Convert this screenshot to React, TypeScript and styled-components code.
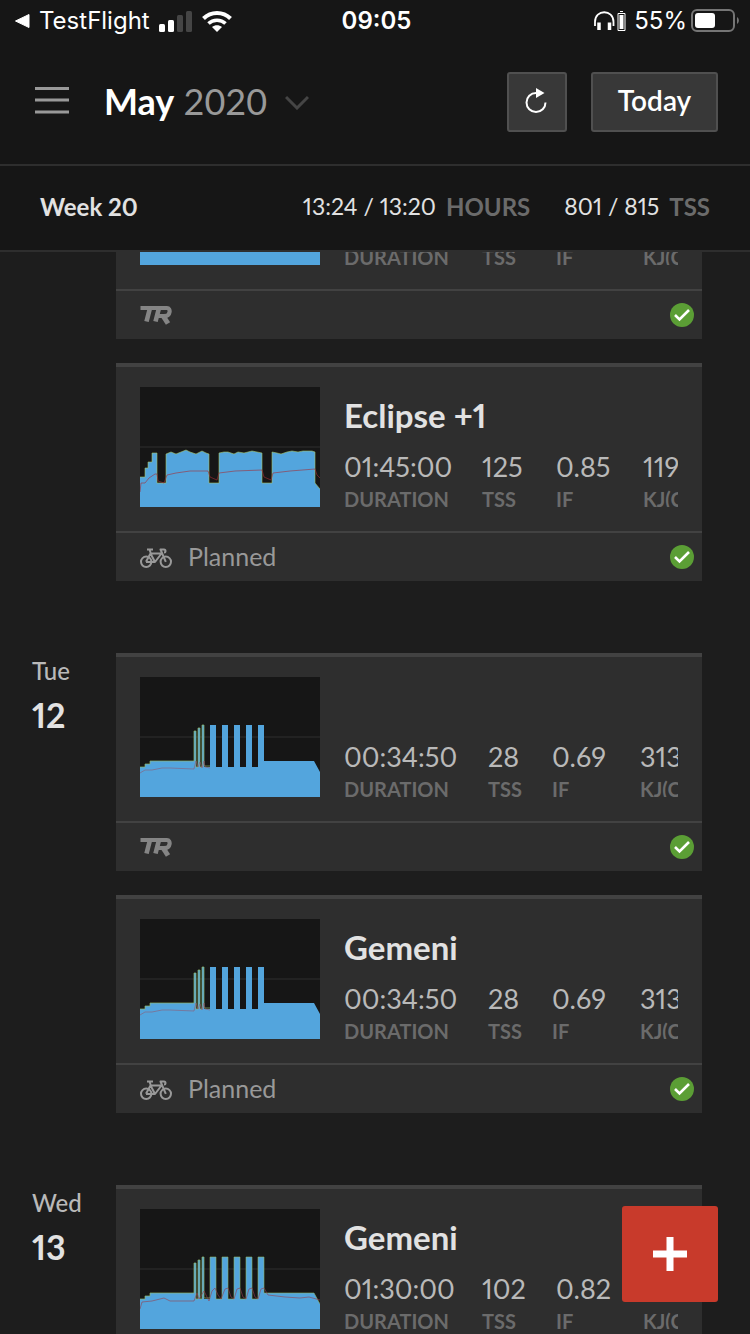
import React, { useLayoutEffect, useRef } from "react";
import styled, { createGlobalStyle } from "styled-components";

const GlobalStyle = createGlobalStyle`
  * { box-sizing: border-box; }
  body { margin: 0; background: #1d1d1d; }
  button { font: inherit; color: inherit; border: 0; padding: 0; margin: 0; cursor: pointer; background: none; }
  h1, h2, h3, p, dl, dd, dt { margin: 0; font: inherit; }
`;

const uiFont = `Lato, "Liberation Sans", sans-serif`;
const systemFont = `Inter, "Liberation Sans", sans-serif`;

const Screen = styled.div`
  position: relative;
  display: flex;
  flex-direction: column;
  height: 100vh;
  overflow: hidden;
  background: #1d1d1d;
  font-family: ${uiFont};
  font-variant-numeric: proportional-nums;
  color: #e2e2e2;
`;

const StatusBar = styled.div`
  flex: none;
  display: grid;
  grid-template-columns: 1fr auto 1fr;
  align-items: center;
  height: 40px;
  padding: 0 11px 0 14px;
  background: #161616;
  color: #fff;
  font-family: ${systemFont};
  font-size: 24px;
  line-height: 42px;
`;

const StatusGroup = styled.div<{ $end?: boolean }>`
  display: flex;
  align-items: center;
  justify-content: ${(p) => (p.$end ? "flex-end" : "flex-start")};
  gap: ${(p) => (p.$end ? "4px" : "9px")};
`;

const BackLink = styled.a`
  display: flex;
  align-items: center;
  gap: 9px;
  color: inherit;
  text-decoration: none;
`;

const Clock = styled.time`
  font-weight: 600;
`;

const Header = styled.header`
  flex: none;
  display: flex;
  align-items: center;
  height: 126px;
  padding: 0 32px 0 34px;
  border-bottom: 2px solid #2e2e2e;
  background: #161616;
`;

const MenuButton = styled.button`
  display: flex;
  width: 36px;
  height: 36px;
  margin-right: 34px;
`;

const MonthButton = styled.button`
  display: flex;
  align-items: center;
  gap: 18px;
  color: #999;
  font-size: 36px;
  font-variant-numeric: tabular-nums;
  line-height: 44px;

  span { padding-bottom: 2px; }
  strong { color: #fff; font-weight: 700; }
`;

const Actions = styled.div`
  display: flex;
  gap: 24px;
  margin-left: auto;
`;

const HeaderButton = styled.button<{ $square?: boolean }>`
  display: flex;
  align-items: center;
  justify-content: center;
  height: 60px;
  width: ${(p) => (p.$square ? "60px" : "127px")};
  padding-bottom: 4px;
  border: 2px solid #505050;
  border-radius: 3px;
  background: #383838;
  color: #fff;
  font-size: 28px;
  font-weight: 600;
`;

const WeekBar = styled.section`
  flex: none;
  display: flex;
  align-items: center;
  height: 86px;
  padding: 0 40px 4px;
  border-bottom: 2px solid #2e2e2e;
  background: #161616;
  font-size: 24px;
`;

const WeekTitle = styled.h2`
  margin-right: auto;
  font-weight: 700;
`;

const WeekTotal = styled.p`
  display: flex;
  align-items: center;
  gap: 10px;
  margin-left: 34px;
  font-size: 23px;
  white-space: nowrap;

  span { color: #6b6b6b; font-size: 24px; font-weight: 700; }
`;

const Calendar = styled.main`
  flex: 1;
  min-height: 0;
  overflow-y: auto;
  scrollbar-width: none;
`;

const Day = styled.section`
  display: grid;
  grid-template-columns: 84px minmax(0, 1fr);
  padding: 0 48px 72px 32px;
`;

const DayLabel = styled.h2`
  padding-top: 4px;
  color: #b9b9b9;
  font-size: 24px;
  font-weight: 500;
  line-height: 28px;
`;

const DayNumber = styled.strong`
  display: block;
  margin-top: 10px;
  color: #e2e2e2;
  font-size: 34px;
  font-weight: 700;
  line-height: 40px;
`;

const Cards = styled.div`
  display: grid;
  gap: 24px;
`;

const Card = styled.article`
  border-top: 4px solid #424242;
  background: #2e2e2e;
`;

const CardBody = styled.div`
  display: grid;
  grid-template-columns: 180px minmax(0, 1fr);
  column-gap: 24px;
  padding: 20px 24px 24px;
`;

const Details = styled.div`
  overflow: hidden;
`;

const CardTitle = styled.h3`
  height: 56px;
  font-size: 33px;
  font-weight: 700;
  line-height: 56px;
`;

const Stats = styled.dl<{ $columns: string }>`
  display: grid;
  grid-template-columns: ${(p) => p.$columns};
  white-space: nowrap;
`;

const Stat = styled.div`
  display: flex;
  flex-direction: column-reverse;
  min-width: 0;

  dd { height: 48px; color: #b9b9b9; font-size: 27px; line-height: 48px; }
  dt { color: #6b6b6b; font-size: 20px; font-weight: 700; line-height: 16px; }
`;

const CardFooter = styled.footer`
  display: flex;
  align-items: center;
  gap: 16px;
  height: 50px;
  padding: 0 8px 0 24px;
  border-top: 2px solid #424242;
  color: #999;
  font-size: 25px;
  line-height: 44px;

  span { padding-bottom: 2px; }
  > :last-child { margin-left: auto; }
`;

const AddButton = styled.button`
  position: absolute;
  right: 32px;
  bottom: 32px;
  display: flex;
  align-items: center;
  justify-content: center;
  width: 96px;
  height: 96px;
  border-radius: 3px;
  background: #c83a2b;
`;

const BLUE = "#53a5dd";

type ChartKind = "solid" | "eclipse" | "planned" | "ridden";

const ECLIPSE_TOP =
  "M0 90H5V81H8V75H12V66H17V96H26V67L31 65L36 67L41 65L46 63L50 65L56 67L62 64L66 66L69 67V96H79V66L84 65H88L94 67L98 65L104 66L108 65L112 64L117 65L122 66V96H132V65L137 66L141 67L147 65L152 64L158 65L163 64H172L175 65V96L180 102";

const WARMUP = "M0 90H5V87H10V84H54V54H56V90H58V51H60V90H62V48H64V89H70";

function Chart({ kind }: { kind: ChartKind }) {
  return (
    <svg width="180" height="120" viewBox="0 0 180 120" role="img" aria-label="Power profile">
      <rect width="180" height="120" fill="#161616" />
      <path d="M0 60H180" stroke="#222" strokeWidth="2" />
      {kind === "solid" && <rect y="66" width="180" height="54" fill={BLUE} />}
      {kind === "eclipse" && (
        <>
          <path d={ECLIPSE_TOP + "V120H0Z"} fill={BLUE} />
          <path d={ECLIPSE_TOP} fill="none" stroke="#a5c46a" strokeWidth="0.6" />
          <path
            d="M0 105L1 96L5 96L9 91L15 87L17 87L18 94L24 96L27 88L36 86L50 84L68 84L70 90L77 93L79 86L95 84L122 83L124 90L131 93L133 86L150 84L175 82L177 88L180 91"
            fill="none" stroke="#a32d36" strokeWidth="0.6"
          />
        </>
      )}
      {(kind === "planned" || kind === "ridden") && (
        <>
          <path
            d="M0 90H5V87H10V84H54V54H56V90H58V51H60V90H62V48H64V90H70V48H76V90H82V48H88V90H94V48H100V90H106V48H112V90H118V48H124V84H174L180 95V120H0Z"
            fill={BLUE}
          />
          <path d={WARMUP} fill="none" stroke="#8fb76b" strokeWidth="0.7" />
        </>
      )}
      {kind === "planned" && (
        <path
          d="M0 96L5 93H12L22 91L30 91L54 92L56 84L58 90L60 85L62 91L64 84L65 90L70 91"
          fill="none" stroke="#8d5a74" strokeWidth="0.6"
        />
      )}
      {kind === "ridden" && (
        <>
          <path
            d="M70 89V48H76V90H82V48H88V90H94V48H100V90H106V48H112V90H118V48H124V84H174L180 95"
            fill="none" stroke="#8fb76b" strokeWidth="0.6"
          />
          <path
            d="M0 100L2 93L12 92L24 89L30 92H54L57 84L59 90L64 82L69 92L72 82L75 79L78 86L81 90L85 80L88 79L91 88L94 90L97 80L100 79L103 88L106 90L109 80L112 79L115 88L118 90L121 80L124 79L128 86L145 88L160 89L169 88L180 91"
            fill="none" stroke="#93404f" strokeWidth="0.6"
          />
        </>
      )}
    </svg>
  );
}

function BrandMark() {
  return (
    <svg width="32" height="20" viewBox="0 0 32 20" role="img" aria-label="TrainerRoad" fill="none" stroke="#858585">
      <path d="M0.5 3H27C31 3 30.500 11 25 11H17" strokeWidth="4.200" />
      <path d="M10 3L6.500 16.500M19 3L15.500 16.500" strokeWidth="4.600" />
      <path d="M22.500 10L28 18.500" strokeWidth="5" />
    </svg>
  );
}

function BikeIcon() {
  return (
    <svg width="32" height="22" viewBox="0 0 32 22" aria-hidden="true" fill="none" stroke="#999" strokeWidth="2">
      <circle cx="6.200" cy="15.800" r="5.200" />
      <circle cx="25.800" cy="15.800" r="5.200" />
      <path
        d="M6 15.800L10.500 7.500H21.500L15 16H6M10.500 7.500L15 16M7 3.500H13M11 8L9.500 3.500M25.800 15.800L20.500 3.500H24C26 3.500 26 6.500 24 6.500"
        strokeLinejoin="round"
      />
    </svg>
  );
}

function DoneIcon() {
  return (
    <svg width="24" height="24" viewBox="0 0 24 24" role="img" aria-label="Completed">
      <circle cx="12" cy="12" r="12" fill="#5b9e35" />
      <path d="M5 12L9.500 16.500L19 7" fill="none" stroke="#fff" strokeWidth="2.600" />
    </svg>
  );
}

type Workout = {
  title?: string;
  chart: ChartKind;
  values?: [string, string, string, string];
  planned: boolean;
};

const LABELS = ["DURATION", "TSS", "IF", "KJ(Cal)"];
const LONG = "138px 74px 87px 1fr";
const SHORT = "144px 64px 88px 1fr";

function WorkoutCard({ title, chart, values, planned }: Workout) {
  return (
    <Card>
      <CardBody>
        <Chart kind={chart} />
        <Details>
          <CardTitle>{title}</CardTitle>
          <Stats $columns={values && values[1].length < 3 ? SHORT : LONG}>
            {LABELS.map((label, i) => (
              <Stat key={label}>
                <dt>{label}</dt>
                <dd>{values?.[i]}</dd>
              </Stat>
            ))}
          </Stats>
        </Details>
      </CardBody>
      <CardFooter>
        {planned ? <><BikeIcon /><span>Planned</span></> : <BrandMark />}
        <DoneIcon />
      </CardFooter>
    </Card>
  );
}

const DAYS: { name?: string; date?: string; workouts: Workout[] }[] = [
  {
    workouts: [
      { chart: "solid", planned: false },
      { title: "Eclipse +1", chart: "eclipse", values: ["01:45:00", "125", "0.85", "119"], planned: true },
    ],
  },
  {
    name: "Tue", date: "12",
    workouts: [
      { chart: "planned", values: ["00:34:50", "28", "0.69", "313"], planned: false },
      { title: "Gemeni", chart: "planned", values: ["00:34:50", "28", "0.69", "313"], planned: true },
    ],
  },
  {
    name: "Wed", date: "13",
    workouts: [
      { title: "Gemeni", chart: "ridden", values: ["01:30:00", "102", "0.82", ""], planned: true },
    ],
  },
];

export default function App() {
  const calendar = useRef<HTMLElement>(null);

  // Open the calendar part-way through the first workout.
  useLayoutEffect(() => {
    if (calendar.current) calendar.current.scrollTop = 131;
  }, []);

  return (
    <Screen>
      <GlobalStyle />
      <StatusBar>
        <StatusGroup>
          <BackLink href="#back">
            <svg width="16" height="16" viewBox="0 0 16 16" aria-hidden="true">
              <path d="M1.500 8L15 1.500V14.500Z" fill="#fff" stroke="#fff" strokeLinejoin="round" />
            </svg>
            TestFlight
          </BackLink>
          <svg width="34" height="22" viewBox="0 0 34 22" role="img" aria-label="Signal">
            <rect x="0" y="14" width="6" height="8" rx="1.500" fill="#fff" />
            <rect x="9" y="10" width="6" height="12" rx="1.500" fill="#fff" />
            <rect x="18" y="5" width="6" height="17" rx="1.500" fill="#454545" />
            <rect x="27" y="1" width="6" height="21" rx="1.500" fill="#454545" />
          </svg>
          <svg width="30" height="22" viewBox="0 0 30 22" role="img" aria-label="Wi-Fi" fill="none" stroke="#fff" strokeWidth="4">
            <path d="M1.500 8.500C9 1 21 1 28.500 8.500" />
            <path d="M6.500 13.500C11 9 19 9 23.500 13.500" strokeWidth="3.500" />
            <path d="M10 17C13 14.500 17 14.500 20 17L15 22Z" fill="#fff" stroke="none" />
          </svg>
        </StatusGroup>
        <Clock>09:05</Clock>
        <StatusGroup $end>
          <svg width="36" height="20" viewBox="0 0 36 20" role="img" aria-label="Headphones battery" fill="none" stroke="#fff">
            <path d="M1 15V11C1 -2 19.500 -2 19.500 11V15" strokeWidth="1.800" />
            <path d="M5 11.500V19M15.500 11.500V19" strokeWidth="3.500" />
            <path d="M24 2.500H31V19.500H24ZM26 .5H29" />
            <path d="M27.500 4V18" strokeWidth="4" />
          </svg>
          <span>55%</span>
          <svg width="48" height="24" viewBox="0 0 48 24" role="img" aria-label="Battery">
            <rect x="1" y="1" width="42" height="21" rx="5" fill="none" stroke="#757575" strokeWidth="2" />
            <rect x="4" y="4" width="20" height="15" rx="3" fill="#fff" />
            <path d="M46 8V15C48.500 13.500 48.500 9.500 46 8Z" fill="#757575" />
          </svg>
        </StatusGroup>
      </StatusBar>

      <Header>
        <MenuButton aria-label="Menu">
          <svg width="36" height="36" viewBox="0 0 36 36" aria-hidden="true">
            <path d="M1 4.500H35M1 16H35M1 28H35" stroke="#999" strokeWidth="3" />
          </svg>
        </MenuButton>
        <MonthButton>
          <span><strong>May</strong> 2020</span>
          <svg width="24" height="16" viewBox="0 0 24 16" aria-hidden="true">
            <path d="M1 3L12 14L23 3" fill="none" stroke="#454545" strokeWidth="3" />
          </svg>
        </MonthButton>
        <Actions>
          <HeaderButton $square aria-label="Refresh">
            <svg width="24" height="28" viewBox="0 0 24 28" aria-hidden="true">
              <path d="M11 7A9.500 9.500 0 1 0 20.500 16.500" fill="none" stroke="#fff" strokeWidth="2" />
              <path d="M11 2L19.500 7L11 12Z" fill="#fff" />
            </svg>
          </HeaderButton>
          <HeaderButton>Today</HeaderButton>
        </Actions>
      </Header>

      <WeekBar>
        <WeekTitle>Week 20</WeekTitle>
        <WeekTotal>13:24 / 13:20 <span>HOURS</span></WeekTotal>
        <WeekTotal>801 / 815 <span>TSS</span></WeekTotal>
      </WeekBar>

      <Calendar ref={calendar}>
        {DAYS.map((day, d) => (
          <Day key={d}>
            <DayLabel>
              {day.name}
              <DayNumber>{day.date}</DayNumber>
            </DayLabel>
            <Cards>
              {day.workouts.map((workout, i) => (
                <WorkoutCard key={i} {...workout} />
              ))}
            </Cards>
          </Day>
        ))}
      </Calendar>

      <AddButton aria-label="Add workout">
        <svg width="34" height="34" viewBox="0 0 34 34" aria-hidden="true">
          <path d="M17 0V34M0 17H34" stroke="#fff" strokeWidth="7" />
        </svg>
      </AddButton>
    </Screen>
  );
}
